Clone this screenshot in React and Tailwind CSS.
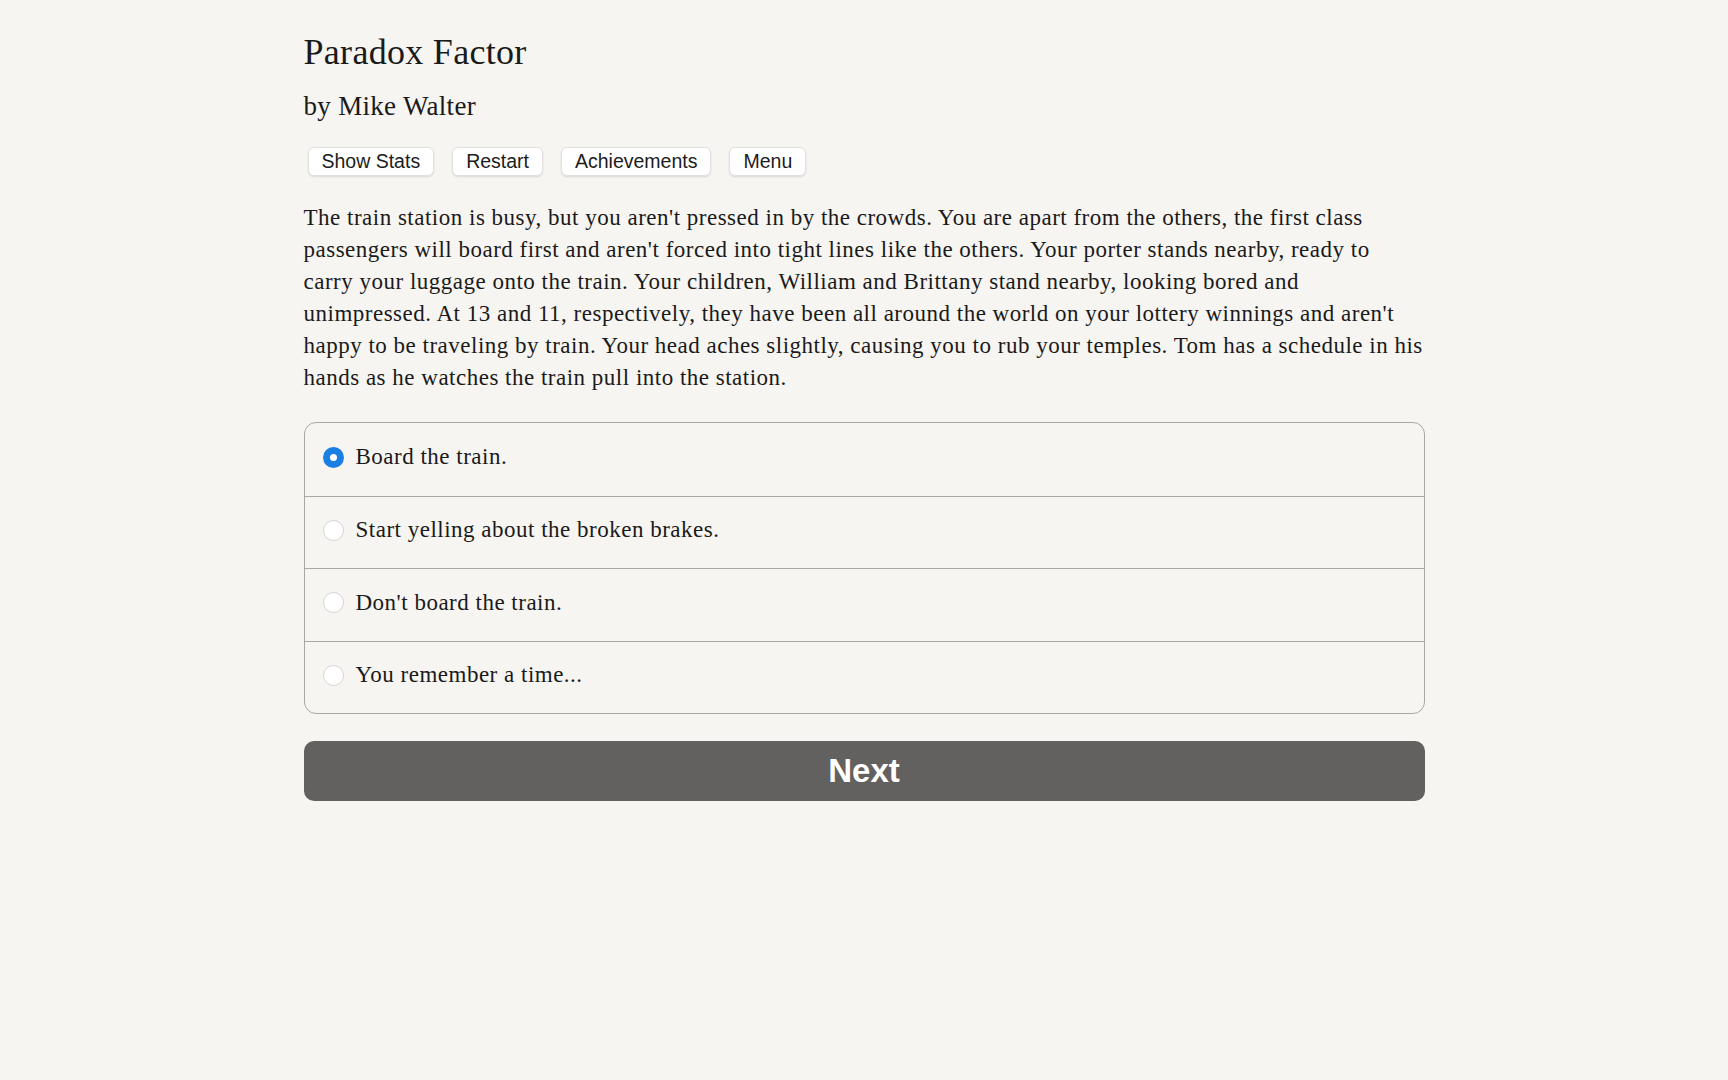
import { useState } from 'react'

const serif = { fontFamily: '"Liberation Serif", "Times New Roman", serif' }

const lines = [
  "The train station is busy, but you aren't pressed in by the crowds. You are apart from the others, the first class",
  "passengers will board first and aren't forced into tight lines like the others. Your porter stands nearby, ready to",
  'carry your luggage onto the train. Your children, William and Brittany stand nearby, looking bored and',
  "unimpressed. At 13 and 11, respectively, they have been all around the world on your lottery winnings and aren't",
  'happy to be traveling by train. Your head aches slightly, causing you to rub your temples. Tom has a schedule in his',
  'hands as he watches the train pull into the station.',
]

const choices = [
  'Board the train.',
  'Start yelling about the broken brakes.',
  "Don't board the train.",
  'You remember a time...',
]

function TopButton({ children }) {
  return (
    <button
      type="button"
      className="h-[29px] px-[13px] rounded-[6px] bg-white border border-[#e3e1de] shadow-[0_1px_2px_rgba(0,0,0,0.12)] text-[19.5px] leading-none text-[#1c1c1c] font-['Liberation_Sans',Arial,sans-serif]"
    >
      {children}
    </button>
  )
}

function Radio({ checked }) {
  if (checked) {
    return (
      <span className="w-[21px] h-[21px] rounded-full bg-[#1a7fe3] flex items-center justify-center shrink-0">
        <span className="w-[7px] h-[7px] rounded-full bg-white" />
      </span>
    )
  }
  return <span className="w-[21px] h-[21px] rounded-full bg-white border border-[#d6d4d1] shrink-0" />
}

export default function App() {
  const [sel, setSel] = useState(0)

  return (
    <div className="min-h-screen w-full bg-[#f7f5f2] text-[#1a1a1a]" style={serif}>
      <div className="w-[1121px] mx-auto pt-[30px]">
        <h1 className="text-[36px] leading-[44px] tracking-[0.3px]">Paradox Factor</h1>
        <h2 className="mt-[15px] text-[27px] leading-[34px] tracking-[0.3px]">by Mike Walter</h2>

        <div className="mt-[24px] ml-[4px] flex gap-[18px]">
          <TopButton>Show Stats</TopButton>
          <TopButton>Restart</TopButton>
          <TopButton>Achievements</TopButton>
          <TopButton>Menu</TopButton>
        </div>

        <p className="mt-[26px] text-[23px] leading-[32px] whitespace-nowrap tracking-[0.5px]">
          {lines.map((l, i) => (
            <span key={i} className="block">{l}</span>
          ))}
        </p>

        <div className="mt-[28px] border border-[#a9a8a6] rounded-[12px] overflow-hidden">
          {choices.map((c, i) => (
            <label
              key={i}
              onClick={() => setSel(i)}
              className={`h-[72.5px] flex items-center gap-[12px] pl-[18px] pb-[4px] cursor-pointer ${i > 0 ? 'border-t border-[#a9a8a6]' : ''}`}
            >
              <Radio checked={sel === i} />
              <span className="text-[23px] tracking-[0.5px]">{c}</span>
            </label>
          ))}
        </div>

        <button
          type="button"
          className="mt-[27px] w-full h-[60px] rounded-[10px] bg-[#626160] text-white text-[33px] font-bold font-['Liberation_Sans',Arial,sans-serif]"
        >
          Next
        </button>
      </div>
    </div>
  )
}
